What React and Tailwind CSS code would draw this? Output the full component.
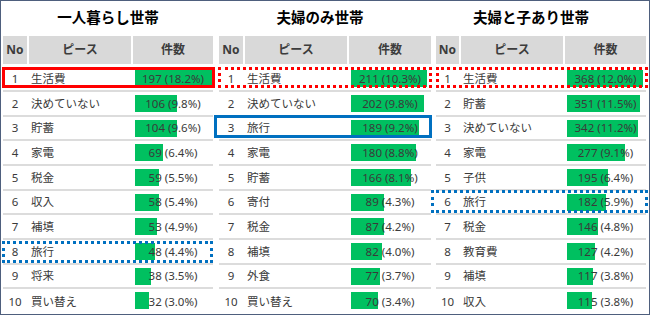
const tables = [
  {
    title: '一人暮らし世帯',
    titlePad: 'pr-0',
    width: 'w-[210px]',
    cols: ['w-[24px]', 'w-[102px]', 'w-[80px]'],
    barMax: 77,
    rows: [
      ['生活費', 197, '18.2'],
      ['決めていない', 106, '9.8'],
      ['貯蓄', 104, '9.6'],
      ['家電', 69, '6.4'],
      ['税金', 59, '5.5'],
      ['収入', 58, '5.4'],
      ['補填', 53, '4.9'],
      ['旅行', 48, '4.4'],
      ['将来', 38, '3.5'],
      ['買い替え', 32, '3.0'],
    ],
    marks: {
      0: 'border-[3px] border-solid border-[#ff0000] -left-[1px] -right-[2px] top-0 bottom-[2px]',
      7: 'border-[3px] border-dotted border-[#0070c0] -left-[1px] right-0 top-[1px] bottom-0',
    },
  },
  {
    title: '夫婦のみ世帯',
    titlePad: 'pr-[10px]',
    width: 'w-[212px] ml-[1px]',
    cols: ['w-[24px]', 'w-[102px]', 'w-[82px]'],
    barMax: 76,
    rows: [
      ['生活費', 211, '10.3'],
      ['決めていない', 202, '9.8'],
      ['旅行', 189, '9.2'],
      ['家電', 180, '8.8'],
      ['貯蓄', 166, '8.1'],
      ['寄付', 89, '4.3'],
      ['税金', 87, '4.2'],
      ['補填', 82, '4.0'],
      ['外食', 77, '3.7'],
      ['買い替え', 70, '3.4'],
    ],
    marks: {
      0: 'border-[3px] border-dotted border-[#ff0000] -left-[1px] -right-[1px] top-0 bottom-[2px]',
      2: 'border-[3px] border-solid border-[#0070c0] -left-[5px] -right-[1px] -top-[2px] bottom-[1px]',
    },
  },
  {
    title: '夫婦と子あり世帯',
    titlePad: 'pr-[20px]',
    width: 'w-[210px]',
    cols: ['w-[23px]', 'w-[102px]', 'w-[81px]'],
    barMax: 76,
    rows: [
      ['生活費', 368, '12.0'],
      ['貯蓄', 351, '11.5'],
      ['決めていない', 342, '11.2'],
      ['家電', 277, '9.1'],
      ['子供', 195, '6.4'],
      ['旅行', 182, '5.9'],
      ['税金', 146, '4.8'],
      ['教育費', 127, '4.2'],
      ['補填', 117, '3.8'],
      ['収入', 115, '3.8'],
    ],
    marks: {
      0: 'border-[3px] border-dotted border-[#ff0000] left-0 -right-[2px] top-0 bottom-[2px]',
      5: 'border-[3px] border-dotted border-[#0070c0] -left-[5px] -right-[2px] -top-[1px] bottom-0',
    },
  },
];

function RankTable({ table }) {
  const max = table.rows[0][1];
  return (
    <div className={`${table.width} flex flex-col shrink-0`}>
      {/* Title */}
      <div className={`h-[36px] flex items-center justify-center text-[14.5px] font-bold text-black ${table.titlePad}`}>
        {table.title}
      </div>

      {/* Header */}
      <div className="h-[29.5px] flex gap-[2px] mb-[3px] text-[12px] font-bold text-[#3c3c3c]">
        <div className={`${table.cols[0]} bg-[#d9d9d9] flex items-center justify-center`}>No</div>
        <div className={`${table.cols[1]} bg-[#d9d9d9] flex items-center justify-center`}>ピース</div>
        <div className={`${table.cols[2]} bg-[#d9d9d9] flex items-center justify-center`}>件数</div>
      </div>

      {/* Rows */}
      {table.rows.map(([name, count, pct], i) => (
        <div
          key={i}
          className={`relative h-[24.7px] shrink-0 flex gap-[2px] text-[11.5px] text-[#3a3a3a] ${i < 9 ? 'border-b-2 border-[#dcdcdc]' : ''}`}
        >
          <div className={`${table.cols[0]} flex items-center justify-center`}>{i + 1}</div>
          <div className={`${table.cols[1]} flex items-center pl-[2px]`}>{name}</div>
          <div className={`${table.cols[2]} relative flex items-center justify-center`}>
            <div
              className="absolute left-[2px] top-[3px] h-[17px] bg-[#00c060]"
              style={{ width: `${2 + ((table.barMax - 2) * count) / max}px` }}
            />
            <span className="relative">
              {count} ({pct}%)
            </span>
          </div>
          {table.marks[i] && <div className={`absolute pointer-events-none z-10 ${table.marks[i]}`} />}
        </div>
      ))}
    </div>
  );
}

export default function App() {
  return (
    <div
      className="w-[650px] h-[315px] overflow-hidden bg-white border border-[#4e5f7d] flex pl-[2px] pr-[3px] gap-[5px]"
      style={{ fontFamily: '"Noto Sans", "Noto Sans CJK JP", sans-serif' }}
    >
      {tables.map((t) => (
        <RankTable key={t.title} table={t} />
      ))}
    </div>
  );
}
